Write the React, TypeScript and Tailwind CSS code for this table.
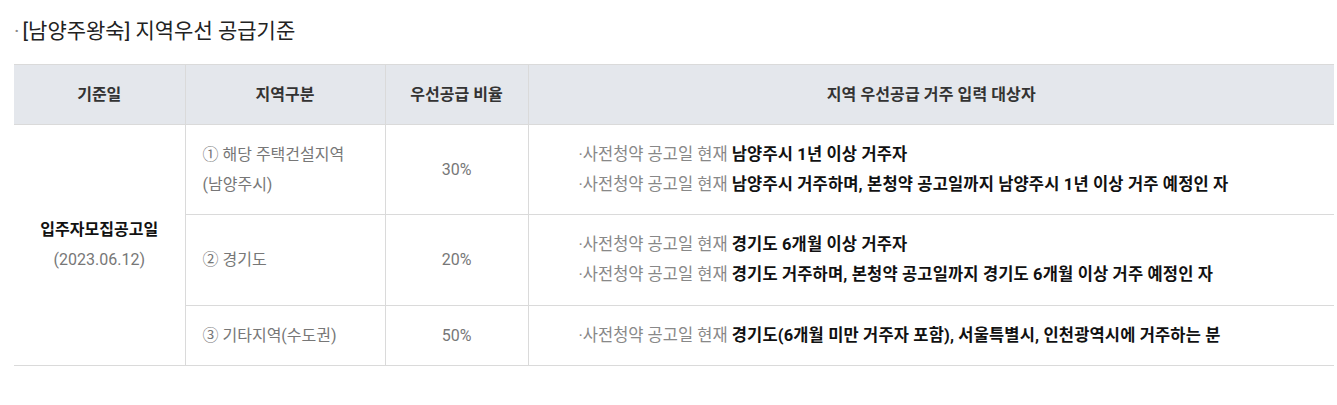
import React from 'react';

const rows = [
  {
    region: ['① 해당 주택건설지역', '(남양주시)'],
    rate: '30%',
    lines: [
      '남양주시 1년 이상 거주자',
      '남양주시 거주하며, 본청약 공고일까지 남양주시 1년 이상 거주 예정인 자',
    ],
    h: 'h-[90px]',
  },
  {
    region: ['② 경기도'],
    rate: '20%',
    lines: ['경기도 6개월 이상 거주자', '경기도 거주하며, 본청약 공고일까지 경기도 6개월 이상 거주 예정인 자'],
    h: 'h-[91px]',
  },
  {
    region: ['③ 기타지역(수도권)'],
    rate: '50%',
    lines: ['경기도(6개월 미만 거주자 포함), 서울특별시, 인천광역시에 거주하는 분'],
    h: 'h-[60px]',
  },
];

export default function App() {
  return (
    <div className="bg-white min-h-screen pt-[17px] pl-[14px] pr-[3px] font-['Roboto','Noto_Sans_CJK_KR',sans-serif]">
      <h2 className="text-[21px] leading-[28px] text-[#222]">
        <span className="text-[#888] mr-[3px]">·</span>[남양주왕숙] 지역우선 공급기준
      </h2>

      <table className="mt-[19px] w-full border-collapse table-fixed text-[16px]">
        <colgroup>
          <col className="w-[171px]" />
          <col className="w-[200px]" />
          <col className="w-[143px]" />
          <col />
        </colgroup>
        <thead>
          <tr className="bg-[#e4e7ec] h-[60px] border-t border-b border-[#dadada]">
            <th className="font-bold text-[#333] border-r border-[#dadada]">기준일</th>
            <th className="font-bold text-[#333] border-r border-[#dadada]">지역구분</th>
            <th className="font-bold text-[#333] border-r border-[#dadada]">우선공급 비율</th>
            <th className="font-bold text-[#333] tracking-[0.1px]">지역 우선공급 거주 입력 대상자</th>
          </tr>
        </thead>
        <tbody>
          {rows.map((r, i) => (
            <tr key={i} className={`${r.h} border-b border-[#dadada]`}>
              {i === 0 && (
                <td rowSpan={3} className="text-center border-r border-[#dadada] leading-[30px]">
                  <div className="font-bold text-[#111]">입주자모집공고일</div>
                  <div className="text-[#777]">(2023.06.12)</div>
                </td>
              )}
              <td className="pl-[17px] text-[#777] leading-[30px] border-r border-[#dadada]">
                {r.region.map((t) => (
                  <div key={t}>{t}</div>
                ))}
              </td>
              <td className="text-center text-[#777] border-r border-[#dadada]">{r.rate}</td>
              <td className="pl-[50px] leading-[30px] text-[16.5px]">
                {r.lines.map((t) => (
                  <div key={t}>
                    <span className="text-[#888]">·사전청약 공고일 현재 </span>
                    <span className="font-bold text-[#111] tracking-[0.15px]">{t}</span>
                  </div>
                ))}
              </td>
            </tr>
          ))}
        </tbody>
      </table>
    </div>
  );
}
